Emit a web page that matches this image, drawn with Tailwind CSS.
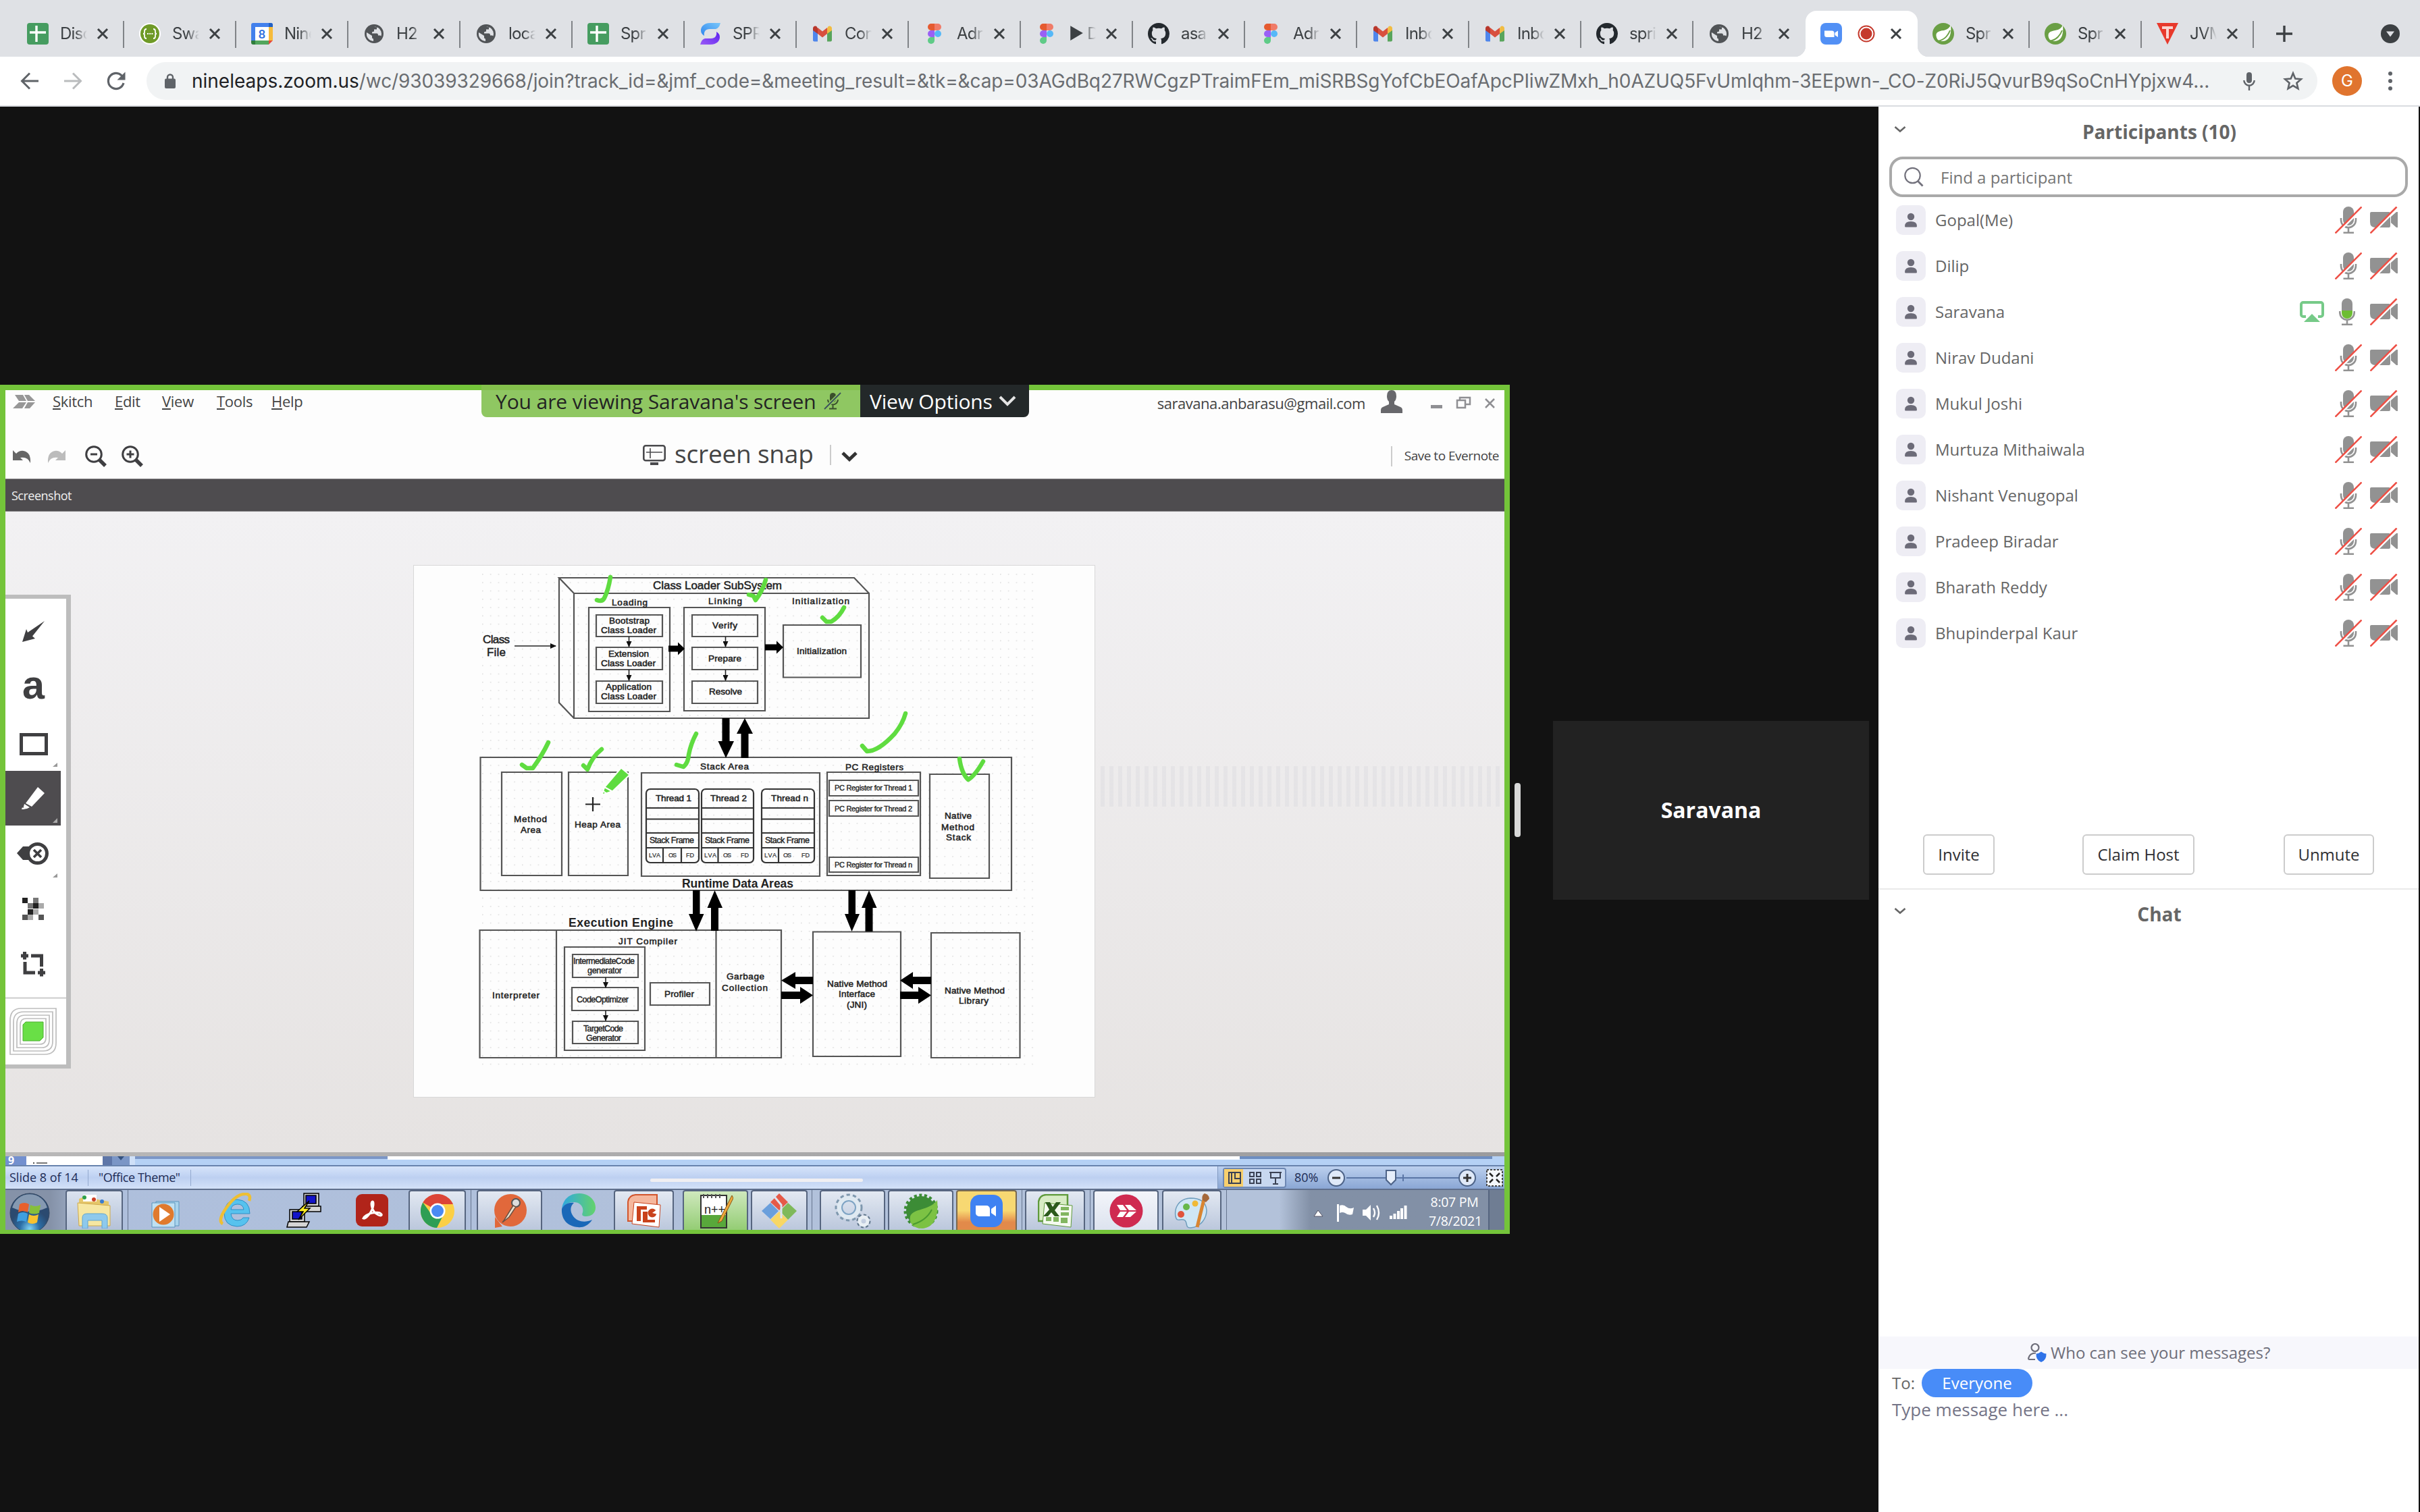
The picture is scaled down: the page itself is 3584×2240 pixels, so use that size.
<!DOCTYPE html>
<html lang="en">
<head>
<meta charset="utf-8">
<title>Zoom meeting</title>
<script src="https://cdn.jsdelivr.net/npm/@tailwindcss/browser@4"></script>
</head>
<body class="w-[3584px] h-[2240px] overflow-hidden bg-[#121212] flex flex-col font-['Open_Sans','Noto_Sans',sans-serif]">

<!-- Icon library -->
<svg class="absolute w-0 h-0">
  <symbol id="close" viewBox="0 0 18 18"><path d="M2 2 16 16M16 2 2 16" stroke="#3c4043" stroke-width="3" fill="none"/></symbol>
  <symbol id="sheets" viewBox="0 0 32 32"><rect width="32" height="32" rx="4" fill="#469c60"/><path d="M4 14H28M14 4V28" stroke="#fff" stroke-width="3.4"/></symbol>
  <symbol id="swagger" viewBox="0 0 32 32"><circle cx="16" cy="16" r="16" fill="#fff"/><circle cx="16" cy="16" r="14" fill="#6f9a27"/><path d="M11 9q-3 0-3 3v2q0 2-2 2 2 0 2 2v2q0 3 3 3M21 9q3 0 3 3v2q0 2 2 2-2 0-2 2v2q0 3-3 3M12 16h2M15.200 16h2M18.400 16h2" stroke="#fff" stroke-width="1.800" fill="none"/></symbol>
  <symbol id="calendar" viewBox="0 0 32 32"><path d="M0 3a3 3 0 0 1 3-3H29a3 3 0 0 1 3 3V6H0Z" fill="#4280ec"/><path d="M0 6H6V26H0Z" fill="#4280ec"/><path d="M26 0h3a3 3 0 0 1 3 3V6H26Z" fill="#2361c4"/><path d="M26 6h6V26H26Z" fill="#f6bb3b"/><path d="M0 26H6V32H3a3 3 0 0 1-3-3Z" fill="#2f7d3c"/><path d="M6 26H26V32H6Z" fill="#52a55c"/><path d="M26 26h6L26 32Z" fill="#e5463a"/><rect x="6" y="6" width="20" height="20" fill="#fff"/><text x="16" y="23" font-family="Roboto" font-size="19" font-weight="500" fill="#2f6fde" text-anchor="middle">8</text></symbol>
  <symbol id="globe" viewBox="0 0 28 28"><circle cx="14" cy="14" r="14" fill="#515457"/><path d="M3 12 11 17v2.500a2 2 0 0 0 2 2V25A11 11 0 0 1 3 12ZM14 3.500q3 0 4 1v3h-4v3l-3 1v2h7q2 0 2 3h3l1.500 1A11 11 0 0 0 20 5" fill="#dfe1e5"/></symbol>
  <symbol id="spiral" viewBox="0 0 32 32"><defs><linearGradient id="sa" x1="0" y1="1" x2="1" y2="0"><stop stop-color="#2f86ee"/><stop offset="1" stop-color="#79c7fa"/></linearGradient><linearGradient id="sb" x1="0" y1="1" x2="1" y2="0"><stop stop-color="#9b5cf6"/><stop offset="1" stop-color="#5b1fee"/></linearGradient></defs><path d="M31 0H16C6 0 2 6 2 11c0 4 2 6 5 8C6 13 9 9 15 9H24Q29 8 31 0Z" fill="url(#sa)"/><path d="M1 32H16c10 0 14-6 14-11 0-4-2-6-5-8 1 6-2 10-8 10H8Q3 24 1 32Z" fill="url(#sb)"/></symbol>
  <symbol id="gmail" viewBox="0 0 30 24"><path d="M1 5V21.500a2 2 0 0 0 2 2H8V10Z" fill="#4f86ec"/><path d="M29 5V21.500a2 2 0 0 1-2 2H22V10Z" fill="#58a55c"/><path d="M22 4V12l7-5V4c0-3-3.500-4.500-5.500-2.700Z" fill="#f1bc42"/><path d="M8 4V12L1 7V4C1 1 4.500-.5 6.500 1.300Z" fill="#b8372c"/><path d="M8 12V3l7 5.500L22 3v9l-7 5.500Z" fill="#d8503f"/></symbol>
  <symbol id="figma" viewBox="0 0 20 30"><path d="M10 0H5a5 5 0 0 0 0 10h5Z" fill="#e55a30"/><path d="M10 0h5a5 5 0 0 1 0 10h-5Z" fill="#f07b68"/><path d="M10 10H5a5 5 0 0 0 0 10h5Z" fill="#9a60f5"/><circle cx="15" cy="15" r="5" fill="#55b8f8"/><path d="M10 20H5a5 5 0 1 0 5 5Z" fill="#5fcb87"/></symbol>
  <symbol id="github" viewBox="0 0 16 16"><path fill="#24292e" d="M8 0C3.580 0 0 3.580 0 8c0 3.540 2.290 6.530 5.470 7.590.4.070.55-.17.55-.38 0-.19-.01-.82-.01-1.490-2.010.37-2.530-.49-2.690-.94-.09-.23-.48-.94-.82-1.130-.28-.15-.68-.52-.01-.53.63-.01 1.080.58 1.230.82.72 1.210 1.870.87 2.330.66.070-.52.28-.87.51-1.070-1.780-.2-3.640-.89-3.640-3.950 0-.87.31-1.590.82-2.150-.08-.2-.36-1.020.08-2.120 0 0 .67-.21 2.200.82a7.600 7.600 0 0 1 4 0c1.530-1.040 2.200-.82 2.200-.82.44 1.100.16 1.920.08 2.120.51.56.82 1.270.82 2.150 0 3.070-1.870 3.750-3.650 3.950.29.25.54.73.54 1.480 0 1.070-.01 1.930-.01 2.200 0 .21.15.46.55.38A8 8 0 0 0 16 8c0-4.420-3.580-8-8-8z"/></symbol>
  <symbol id="zoomfav" viewBox="0 0 32 32"><rect width="32" height="32" rx="8" fill="#5290f5"/><path d="M6 11.500H17a3.500 3.500 0 0 1 3.500 3.500v6H9.500A3.500 3.500 0 0 1 6 17.500ZM21.500 14.500 26 11.500V21L21.500 18Z" fill="#fff"/></symbol>
  <symbol id="record" viewBox="0 0 26 26"><circle cx="13" cy="13" r="11.500" fill="none" stroke="#c5392c" stroke-width="2"/><circle cx="13" cy="13" r="8.500" fill="#c5392c"/></symbol>
  <symbol id="spring" viewBox="0 0 32 32"><circle cx="16" cy="16" r="16" fill="#6a9f45"/><path d="M27 3C28 14 27 27 14 27 9 27 6 24 5.500 19 5 11 15 12 20 10Q25 8 27 3Z" fill="#fff"/><path d="M6 27Q20 26 26 11" stroke="#6a9f45" stroke-width="2" fill="none"/></symbol>
  <symbol id="tplus" viewBox="0 0 32 32"><path d="M0 0H32L16 32Z" fill="#e8392c"/><path d="M8 5H24V9H18V23H14V9H8Z" fill="#fbd5d0"/></symbol>
  <symbol id="person" viewBox="0 0 44 44"><rect width="44" height="44" rx="10" fill="#eeedf4"/><circle cx="22" cy="17" r="5.200" fill="#6c6b78"/><path d="M13 31q0-7 9-7t9 7q0 1.500-1.500 1.500h-15Q13 32.500 13 31Z" fill="#6c6b78"/></symbol>
  <symbol id="micoff" viewBox="0 0 40 40"><rect x="12" width="16" height="28" rx="8" fill="#929292"/><path d="M9 17v3a11 11 0 0 0 22 0V17M20 31v7M12.500 38.800h15.500" fill="none" stroke="#929292" stroke-width="2.600"/><path d="M2 41 40 3" stroke="#fff" stroke-width="3"/><path d="M.5 39.500 39.500.5" stroke="#ee5046" stroke-width="2.600"/></symbol>
  <symbol id="micon" viewBox="0 0 24 40"><path d="M4 18V8a8 8 0 0 1 16 0V18Z" fill="#929292"/><path d="M4 18H20v4a8 8 0 0 1-16 0Z" fill="#6dbd33"/><path d="M1.300 19v2a10.700 10.700 0 0 0 21.400 0V19M12 32v7M4 38.800H20" fill="none" stroke="#929292" stroke-width="2.600"/></symbol>
  <symbol id="camoff" viewBox="0 0 41 40"><path d="M0 10q0-2 2-2H28q2 0 2 2V29q0 2-2 2H8Q0 31 0 23ZM31 15 39 8h2V31H39L31 24Z" fill="#929292"/><path d="M2 41 40 3" stroke="#fff" stroke-width="3"/><path d="M.5 39.500 39.500.5" stroke="#ee5046" stroke-width="2.600"/></symbol>
  <symbol id="share" viewBox="0 0 36 32"><path d="M9 23H5a3 3 0 0 1-3-3V5A3 3 0 0 1 5 2H31a3 3 0 0 1 3 3V20a3 3 0 0 1-3 3H27" fill="none" stroke="#76ca88" stroke-width="4"/><path d="M18 19 30 31H6Z" fill="#76ca88"/></symbol>
</svg>

<!-- Browser tab strip -->
<div id="tabs" class="h-[84px] shrink-0 bg-[#dfe1e5] pt-4 pl-[18px] flex font-[Inter,sans-serif]"></div>

<!-- Address row -->
<div class="h-[74px] shrink-0 bg-white border-b-2 border-[#dadce0] pl-[30px] pr-[36px] flex items-center font-[Inter,sans-serif]">
  <svg class="w-7 h-7 shrink-0" viewBox="0 0 28 28" fill="none" stroke="#5f6368" stroke-width="3"><path d="M27 14H3M14 2.500 2.500 14 14 25.500"/></svg>
  <svg class="w-7 h-7 ml-9 shrink-0" viewBox="0 0 28 28" fill="none" stroke="#babcbe" stroke-width="3"><path d="M1 14H25M14 2.500 25.500 14 14 25.500"/></svg>
  <svg class="w-7 h-7 ml-9 shrink-0" viewBox="0 0 28 28"><path d="M24 8.500A11.500 11.500 0 1 0 25 17" fill="none" stroke="#5f6368" stroke-width="3.200"/><path d="M27.500.5V12.500H15.500Z" fill="#5f6368"/></svg>
  <div class="w-[3215px] h-14 ml-[31px] shrink-0 rounded-full bg-[#f1f3f4] flex items-center pl-[27px] text-[28px] text-[#6a6d71]">
    <svg class="w-4 h-[22px] shrink-0" viewBox="0 0 16 22"><path d="M4 9V5.500a4 4 0 0 1 8 0V9" fill="none" stroke="#5f6368" stroke-width="2.400"/><rect y="7.500" width="16" height="14.500" rx="2" fill="#5f6368"/></svg>
    <div class="ml-6 w-[3030px] whitespace-nowrap"><span class="text-[#202124]">nineleaps.zoom.us</span><span class="tracking-[-0.1px]">/wc/93039329668/join?track_id=&amp;jmf_code=&amp;meeting_result=&amp;tk=&amp;cap=03AGdBq27RWCgzPTraimFEm_miSRBSgYofCbEOafApcPIiwZMxh_h0AZUQ5FvUmIqhm-3EEpwn-_CO-Z0RiJ5QvurB9qSoCnHYpjxw4...</span></div>
    <svg class="w-[18px] h-[27px] ml-[8px] shrink-0" viewBox="0 0 18 27"><rect x="5" width="8" height="16" rx="4" fill="#5f6368"/><path d="M1.300 12a7.700 7.700 0 0 0 15.400 0M9 20v7" fill="none" stroke="#5f6368" stroke-width="2.400"/></svg>
    <svg class="w-[30px] h-[30px] ml-[41px] shrink-0" viewBox="0 0 30 30"><path d="M15 3.500 18.300 11.500 27 12.200 20.400 17.900 22.400 26.300 15 21.800 7.600 26.300 9.600 17.900 3 12.200 11.700 11.500Z" fill="none" stroke="#5f6368" stroke-width="2.600"/></svg>
  </div>
  <div class="w-11 h-11 ml-[22px] shrink-0 rounded-full bg-[#e0742e] text-white text-[24px] flex items-center justify-center">G</div>
  <svg class="w-[6px] h-7 ml-[39px] shrink-0" viewBox="0 0 6 28" fill="#5f6368"><circle cx="3" cy="3" r="3"/><circle cx="3" cy="14" r="3"/><circle cx="3" cy="25" r="3"/></svg>
</div>

<main class="h-[2082px] flex items-center">

  <!-- Shared screen -->
  <section class="relative w-[2236px] h-[1258px] shrink-0 border-x-8 border-t-8 border-b-[6px] border-[#74c43a] bg-[#fdfdfd] flex flex-col text-[#444]">
    <div class="h-[34px] shrink-0 flex items-center pl-[11px] text-[22px] tracking-[-0.3px]">
      <svg class="w-[34px] h-[20px] shrink-0" viewBox="0 0 34 20" fill="#979797"><path d="M3 0H15L20 9H9ZM17 0H24L33 9H22ZM9 11H20L14 20H0ZM22 11H33L25 20H17Z"/></svg>
      <div class="ml-[25px] w-[92px] -mt-0.5"><u>S</u>kitch</div>
      <div class="w-[70px] -mt-0.5"><u>E</u>dit</div>
      <div class="w-[81px] -mt-0.5"><u>V</u>iew</div>
      <div class="w-[81px] -mt-0.5"><u>T</u>ools</div>
      <div class="w-[80px] -mt-0.5"><u>H</u>elp</div>
      <div class="ml-auto pt-1 text-[22px] tracking-[-0.45px]">saravana.anbarasu@gmail.com</div>
      <svg class="w-8 h-[34px] ml-[23px]" viewBox="0 0 32 34" fill="#68686c"><path d="M16 0q7 0 7 9 0 5-3 8v4l9 4q3 1 3 5v4H0V30q0-4 3-5l9-4V17Q9 14 9 9q0-9 7-9Z"/></svg>
      <svg class="w-[96px] h-5 ml-[42px] mr-[13px] mt-1" viewBox="0 0 96 20" fill="none" stroke="#8f8f93" stroke-width="2.500"><path d="M0 15.500H17" stroke-width="5"/><path d="M39 6H51V17H39ZM43 6V2H58V12H52"/><path d="M81 4 94 17M94 4 81 17"/></svg>
    </div>
    <div class="mt-[30px] h-[67px] shrink-0 flex items-center pl-[11px]">
      <svg class="w-[27px] h-5 shrink-0" viewBox="0 0 27 20" fill="#666"><path d="M0 1 5 6Q10 1 16 2 27 4 26 20 22 10 11 12L15 16H0Z"/></svg>
      <svg class="w-[27px] h-5 ml-6 shrink-0" viewBox="0 0 27 20" fill="#bcbcbc"><path d="M27 1 22 6Q17 1 11 2 0 4 1 20 5 10 16 12L12 16H27Z"/></svg>
      <svg class="w-8 h-8 ml-[29px] shrink-0" viewBox="0 0 32 32" fill="none" stroke="#3f3f42"><circle cx="13" cy="13" r="11.300" stroke-width="3"/><path d="M8 13H18" stroke-width="3"/><path d="M21 21 30 30" stroke-width="5.500"/></svg>
      <svg class="w-8 h-8 ml-[22px] shrink-0" viewBox="0 0 32 32" fill="none" stroke="#3f3f42"><circle cx="13" cy="13" r="11.300" stroke-width="3"/><path d="M7.500 13h11M13 7.500v11" stroke-width="3"/><path d="M21 21 30 30" stroke-width="5.500"/></svg>
      <svg class="w-[34px] h-[30px] ml-[740px] -mt-1 shrink-0" viewBox="0 0 34 30" fill="none" stroke="#4a4a4d"><rect x="1.300" y="1.300" width="31.400" height="22" rx="3" stroke-width="2.600"/><path d="M11 5V20M5 11H29" stroke-width="1.600"/><path d="M11 28H23" stroke-width="4"/></svg>
      <div class="ml-[13px] w-[230px] text-[37px] leading-[58px] pb-2 tracking-[-0.2px]">screen snap</div>
      <div class="w-0.5 h-[30px] bg-[#ccc] -mt-1"></div>
      <svg class="w-6 h-4 ml-[15px]" viewBox="0 0 24 16" fill="none" stroke="#333" stroke-width="5"><path d="M2 3 12 12.500 22 3"/></svg>
      <div class="w-0.5 h-[30px] bg-[#ccc] ml-auto"></div>
      <div class="ml-[18px] mr-2 text-[19px] tracking-[-0.5px]">Save to Evernote</div>
    </div>
    <div class="h-[49px] shrink-0 bg-[#4e4c4f] border-y border-[#8a898b] pl-[9px] pt-0.5 flex items-center text-[18px] text-[#f0f0f0] tracking-[-0.5px]">Screenshot</div>

    <!-- Editor canvas -->
    <div class="relative h-[949px] shrink-0 bg-linear-to-b from-[#f2f1f3] to-[#e6e3e2] flex items-start">
      <div class="absolute left-[1622px] right-0 top-[377px] h-[60px] opacity-35 bg-[repeating-linear-gradient(90deg,#d6d6dc_0_6px,transparent_6px_13px)]"></div>
      <div class="mt-[123px] w-[97px] h-[702px] shrink-0 bg-white border-y-[6px] border-r-[7px] border-[#bdbdbd]">
        <svg class="block w-[90px] h-[690px]" viewBox="8 887 90 690">
          <path d="M66 920 41 937 39 932 33 951 52 946 48 942.500Z" fill="#3f3f41"/>
          <text x="33" y="1035" font-family="Liberation Sans" font-weight="700" font-size="60" textLength="33" lengthAdjust="spacingAndGlyphs" fill="#3f3f41">a</text>
          <rect x="31.500" y="1088.500" width="37" height="28" fill="none" stroke="#3f3f41" stroke-width="5"/>
          <path d="M85 1130V1136H78ZM85 1294V1300H78Z" fill="#999"/>
          <rect x="8" y="1142" width="82" height="81" fill="#4e4c4f"/><path d="M85 1212V1219H78Z" fill="#aaa"/>
          <path d="M56 1166 66 1175 47 1195 38 1190ZM36 1191 44 1196 40 1198 34 1199ZM33 1196 36 1199 32 1199Z" fill="#fff"/>
          <path d="M25 1264 34 1254H46V1274H34Z" fill="#3f3f41"/><circle cx="55.500" cy="1264.500" r="14" fill="#fff" stroke="#3f3f41" stroke-width="5"/><path d="M50 1259 61 1270M61 1259 50 1270" stroke="#3f3f41" stroke-width="3.600"/>
          <g><path d="M33 1330h8v8h-8ZM49 1338h8v8h-8ZM41 1347h8v8h-8Z" fill="#222"/><path d="M49 1330h8v8h-8ZM41 1338h8v8h-8Z" fill="#777"/><path d="M57 1338h8v8h-8ZM49 1347h8v8h-8ZM41 1355h8v8h-8Z" fill="#aaa"/><path d="M33 1355h8v8h-8ZM57 1355h8v8h-8Z" fill="#555"/></g>
          <path d="M46 1416H61.500V1432M37 1425V1441H52" fill="none" stroke="#3f3f41" stroke-width="5"/><path d="M31 1416H42M36.500 1410V1421.500M56 1441H67M61.500 1435V1446.500" stroke="#3f3f41" stroke-width="5"/>
          <path d="M8 1478.500H98" stroke="#ccc" stroke-width="2"/>
          <g fill="none" stroke="#bdbdbd" stroke-width="1.700"><path d="M31 1494H83V1545Q83 1562 66 1562H15V1512Q15 1494 31 1494Z"/><path d="M35 1499H78V1543Q78 1557 64 1557H20V1514Q20 1499 35 1499Z"/><path d="M37 1504H73V1540Q73 1552 62 1552H25V1516Q25 1504 37 1504Z"/><path d="M39 1509H68V1537Q68 1547 59 1547H30V1518Q30 1509 39 1509Z"/></g>
          <path d="M38 1514H64V1537L59 1542H34V1518Z" fill="#69df46" stroke="#4cae31"/>
        </svg>
      </div>

      <!-- JVM architecture drawing -->
      <svg class="block w-[1008px] h-[787px] ml-[508px] mt-[80px] shrink-0 bg-[#fdfdfd] outline outline-[#d8d8d8]" viewBox="613 838 1008 787" font-family="Liberation Sans, Arial, sans-serif" fill="#222">
        <defs>
          <pattern id="dots" x="714" y="850" width="11.800" height="12.300" patternUnits="userSpaceOnUse"><rect width="1.600" height="1.600" fill="#dedede"/></pattern>
          <marker id="tip" markerUnits="userSpaceOnUse" markerWidth="9" markerHeight="8" refX="8" refY="4" orient="auto"><path d="M0 0 9 4 0 8Z" fill="#111"/></marker>
        </defs>
        <rect x="712" y="850" width="820" height="730" fill="url(#dots)"/>
        <g fill="none" stroke="#555" stroke-width="2.200">
          <path d="M850 879H1287V1064H850ZM850 879 828 856H1265L1287 879M828 856V1041L850 1064"/>
          <path d="M872 900H992V1054H872ZM1013 900H1133V1053H1013ZM1160 926H1275V1003.500H1160Z"/>
          <path d="M883 911h98v32h-98ZM883 959h98v33h-98ZM883 1009h98v33h-98ZM1025 911h97v32h-97ZM1025 959h97v33h-97ZM1025 1009h97v33h-97Z"/>
          <path d="M711.500 1122H1498V1319H711.500ZM743 1144h89v153h-89ZM842 1144h88v153h-88ZM950 1145h264v153H950ZM1225 1144h138v153h-138ZM1377 1147h88v154h-88Z"/>
          <path d="M1228 1156h132v23h-132ZM1228 1186h132v23h-132ZM1228 1270h132v22h-132Z"/>
          <g stroke="#333"><rect x="957" y="1169" width="78" height="109" rx="6"/><rect x="1039" y="1169" width="77" height="109" rx="6"/><rect x="1128" y="1169" width="78" height="109" rx="6"/>
          <path d="M957 1197h78m4 0h77m12 0h78M957 1213.500h78m4 0h77m12 0h78M957 1234h78m4 0h77m12 0h78M957 1256h78m4 0h77m12 0h78M982 1256v22M1009 1256v22M1063.500 1256v22M1153 1256v22"/></g>
          <path d="M710.500 1378H1157V1567H710.500ZM824 1378V1567M1060.500 1378V1567M836 1403H955V1556H836ZM848 1414h97v34h-97ZM847 1463h98v34h-98ZM848 1513h97v33h-97ZM963 1456h88v33h-88Z"/>
          <path d="M1204 1380.500H1334V1565H1204ZM1379 1382H1510.500V1567H1379Z"/>
        </g>
        <g stroke="#222" stroke-width="1.600" fill="none">
          <path d="M762 957H823" marker-end="url(#tip)"/><path d="M931.500 943V958" marker-end="url(#tip)"/><path d="M931.500 992V1008" marker-end="url(#tip)"/><path d="M1074.500 943V958" marker-end="url(#tip)"/><path d="M1074.500 992V1008" marker-end="url(#tip)"/><path d="M897 1448V1463" marker-end="url(#tip)"/><path d="M897 1497V1512" marker-end="url(#tip)"/>
        </g>
        <g fill="#000">
          <path d="M990 956.500H1004V951.500L1014 961 1004 970.500V965.500H990ZM1133 954.500H1150V949.500L1160 959 1150 968.500V963.500H1133Z"/>
          <path d="M1069.500 1064H1080.500V1098H1087L1075 1123 1063.500 1098H1069.500ZM1103 1064 1115 1087H1108.500V1123H1097.500V1087H1091Z"/>
          <path d="M1026 1319H1036.500V1354H1042.500L1031 1380 1020 1354H1026ZM1058.500 1319 1070 1345H1064V1379H1053V1345H1047.500Z"/>
          <path d="M1256.500 1319H1267V1354H1273L1261.500 1380 1251 1354H1256.500ZM1287 1319 1298.500 1345H1292.500V1380H1281.500V1345H1276Z"/>
          <path d="M1157 1452.500 1178 1440V1447H1204V1458H1178V1465ZM1204 1474.500 1185 1462V1469H1157V1480H1185V1487ZM1333 1452.500 1352 1440V1447H1379V1458H1352V1465ZM1379 1474.500 1360 1462V1469H1333V1480H1360V1487Z"/>
        </g>
        <g font-size="17" stroke="#222" stroke-width=".5">
          <text x="967" y="873" textLength="191">Class Loader SubSystem</text>
          <text x="715" y="953" textLength="40">Class</text><text x="721" y="972" textLength="28">File</text>
        </g>
        <g font-size="13.500" stroke="#222" stroke-width=".55">
          <text x="906" y="897" textLength="53">Loading</text><text x="1049" y="895" textLength="50">Linking</text><text x="1173" y="895" textLength="85">Initialization</text>
          <text x="1055" y="931" textLength="37">Verify</text><text x="1049" y="980" textLength="49">Prepare</text><text x="1050" y="1029" textLength="49">Resolve</text><text x="1180" y="969" textLength="74">Initialization</text>
          <text x="902" y="923.500" textLength="60">Bootstrap</text><text x="890" y="938" textLength="82">Class Loader</text><text x="901" y="973" textLength="60">Extension</text><text x="890" y="987" textLength="81">Class Loader</text><text x="897" y="1021.500" textLength="68">Application</text><text x="890" y="1036" textLength="82">Class Loader</text>
          <text x="761" y="1218" textLength="49">Method</text><text x="771" y="1234" textLength="30">Area</text><text x="851" y="1226" textLength="68">Heap Area</text><text x="1037" y="1140" textLength="72">Stack Area</text><text x="1252" y="1141" textLength="86">PC Registers</text>
          <text x="1399" y="1213" textLength="40">Native</text><text x="1394" y="1230" textLength="49">Method</text><text x="1401" y="1245" textLength="37">Stack</text>
          <text x="971" y="1187" textLength="53">Thread 1</text><text x="1052" y="1187" textLength="54">Thread 2</text><text x="1142" y="1187" textLength="55">Thread n</text>
          <text x="916" y="1399" textLength="87">JIT Compiler</text><text x="984" y="1477" textLength="44">Profiler</text><text x="729" y="1479" textLength="70">Interpreter</text><text x="1076" y="1451" textLength="56">Garbage</text><text x="1069" y="1467.500" textLength="68">Collection</text>
          <text x="1225" y="1462" textLength="89">Native Method</text><text x="1242" y="1477" textLength="54">Interface</text><text x="1254" y="1493" textLength="30">(JNI)</text><text x="1399" y="1472" textLength="89">Native Method</text><text x="1420" y="1487" textLength="44">Library</text>
        </g>
        <g font-size="12.500" stroke="#222" stroke-width=".4">
          <text x="962" y="1249" textLength="66">Stack Frame</text><text x="1044" y="1249" textLength="66">Stack Frame</text><text x="1133" y="1249" textLength="66">Stack Frame</text>
          <text x="849" y="1428" textLength="91">IntermediateCode</text><text x="870" y="1442" textLength="51">generator</text><text x="854" y="1485" textLength="77">CodeOptimizer</text><text x="864" y="1528" textLength="59">TargetCode</text><text x="868" y="1542" textLength="52">Generator</text>
        </g>
        <g font-size="11" stroke="#222" stroke-width=".35">
          <text x="1236" y="1170.500" textLength="115">PC Register for Thread 1</text><text x="1236" y="1201.500" textLength="115">PC Register for Thread 2</text><text x="1236" y="1285" textLength="115">PC Register for Thread n</text>
        </g>
        <g font-size="9" fill="#333" stroke="#333" stroke-width=".25">
          <text x="961" y="1269.500" textLength="17">LVA</text><text x="990" y="1269.500" textLength="12">OS</text><text x="1016" y="1269.500" textLength="12">FD</text>
          <text x="1043" y="1269.500" textLength="18">LVA</text><text x="1071" y="1269.500" textLength="12">OS</text><text x="1097" y="1269.500" textLength="12">FD</text>
          <text x="1132" y="1269.500" textLength="18">LVA</text><text x="1160" y="1269.500" textLength="12">OS</text><text x="1187" y="1269.500" textLength="12">FD</text>
        </g>
        <g font-size="17.500" font-weight="700"><text x="1010" y="1314.500" textLength="165">Runtime Data Areas</text><text x="842" y="1373" textLength="155">Execution Engine</text></g>
        <g fill="none" stroke="#5fdc40" stroke-width="6.500" stroke-linecap="round" stroke-linejoin="round">
          <path d="M884 889Q892 892 895 886 901 874 904 855"/><path d="M1109 881 1116 883 1119 889Q1129 876 1134 859"/><path d="M1218 915 1224 921H1231Q1243 914 1250 900"/>
          <path d="M773 1133 780 1138H789Q803 1119 812 1100"/><path d="M864 1134 870 1140Q877 1121 891 1110"/><path d="M1002 1133 1012 1136Q1019 1131 1020 1118 1023 1102 1031 1087"/>
          <path d="M1277 1105 1284 1113Q1301 1113 1325 1087 1337 1072 1341 1057"/><path d="M1421 1124Q1424 1146 1434 1155 1444 1149 1456 1128"/>
        </g>
        <path d="M920 1139 931 1148 907 1171 893 1176 896 1167Z" fill="#5fdc40" stroke="#fff" stroke-width="4" paint-order="stroke"/><path d="M895 1166 906 1172M892 1171 899 1176" stroke="#fff" stroke-width="2"/>
        <path d="M867 1191.500H889M878 1181V1202" stroke="#222" stroke-width="2.200"/>
      </svg>
    </div>

    <!-- Slide editor edge -->
    <div class="h-[6px] shrink-0 bg-linear-to-r from-[#b9b8b8] to-[#9b9b9d]"></div>
    <div class="h-[15px] shrink-0 bg-[#b5d1f5] border-b-2 border-[#6883ad] flex items-start overflow-hidden">
      <div class="w-[31px] h-full bg-[#7390cf] text-white text-[16px] font-bold leading-[12px] pl-1 shrink-0">9</div>
      <div class="w-[113px] h-full bg-white shrink-0 pt-[9px] pl-[10px] flex gap-[3px]"><div class="w-0.5 h-0.5 bg-[#555]"></div><div class="w-4 h-0.5 bg-[#777]"></div></div>
      <div class="w-[14px] h-full bg-[#5e76a8] shrink-0"></div>
      <div class="w-[26px] h-full bg-[#7b96c6] shrink-0 flex justify-center"><svg class="w-3 h-2" viewBox="0 0 12 8"><path d="M1 0H11L6 6Z" fill="#34527f"/></svg></div>
      <div class="w-[8px] h-full bg-[#cfe0f8] shrink-0"></div>
      <div class="w-[374px] h-1 bg-[#7b96c6] shrink-0"></div>
      <div class="w-[1262px] h-[5px] bg-white shrink-0"></div>
      <div class="w-[374px] h-1 bg-[#6d8dc0] shrink-0"></div>
    </div>
    <div class="h-[35px] shrink-0 bg-linear-to-b from-[#d6e4fa] via-[#bdd0f1] to-[#d3e1f8] border-b-2 border-[#5f6f8c] flex items-center text-[18px] text-[#1d2c55]">
      <div class="ml-[6px] w-[116px]">Slide 8 of 14</div>
      <div class="w-px h-6 bg-[#93a9cf]"></div>
      <div class="ml-[15px] w-[136px] tracking-[-0.4px]">"Office Theme"</div>
      <div class="w-px h-6 bg-[#93a9cf]"></div>
      <div class="ml-[680px] mt-[8px] w-[315px] h-[5px] rounded-full bg-[#f0eff2]"></div>
      <div class="ml-auto w-[425px] h-full bg-linear-to-b from-[#bcd0ee] to-[#8aa6d4] border-l border-[#8099c0] flex items-center">
        <svg class="w-[94px] h-[30px] ml-[7px]" viewBox="0 0 94 30" fill="none" stroke="#3b4254" stroke-width="2"><rect x="1" y="1" width="92" height="28" rx="3" stroke="#6d87b3" fill="#c8d8f0"/><rect x="2" y="2" width="28" height="26" fill="#f7cf6d" stroke="none"/><path d="M9 7H26V23H9ZM13 7V23M18 7V16H26"/><path d="M40 7h6v6h-6ZM50 7h6v6h-6ZM40 17h6v6h-6ZM50 17h6v6h-6ZM69 7H87M71 7V15H85V7M78 15V24M74 24H82"/></svg>
        <div class="ml-3 w-[48px]">80%</div>
        <svg class="w-[262px] h-7 shrink-0" viewBox="1965 1731 262 28" fill="none" stroke="#4d6387" stroke-width="2"><path d="M1994 1745H2162" stroke="#5a75a5"/><path d="M2078 1740V1750" stroke="#5a75a5"/><circle cx="1979" cy="1745" r="12" fill="#dfe9f8"/><path d="M1973 1745H1985" stroke="#333" stroke-width="3"/><path d="M2053 1734H2067V1748L2060 1755 2053 1748Z" fill="#e6eefa"/><circle cx="2173" cy="1745" r="12" fill="#dfe9f8"/><path d="M2167 1745H2179M2173 1739V1751" stroke="#333" stroke-width="3"/><rect x="2202" y="1733" width="23" height="24" fill="#f4f7fc" stroke="#444" stroke-dasharray="3 2"/><path d="M2206 1738 2211 1743M2221 1738 2216 1743M2206 1752 2211 1747M2221 1752 2216 1747" stroke="#222" stroke-width="2.500"/></svg>
      </div>
    </div>

    <!-- Windows taskbar -->
    <div class="h-[59px] shrink-0 flex bg-linear-to-r from-[#8592a8] from-3% via-[#aebfdc] via-6% to-[#b3c2da] to-80% overflow-hidden">
      <div class="w-[72px] shrink-0 flex items-center justify-center pt-2"><svg class="w-[60px] h-[60px] shrink-0" viewBox="0 0 60 60"><defs><radialGradient id="orb" cy=".9"><stop stop-color="#7fd3f4"/><stop offset=".5" stop-color="#2b6ea6"/><stop offset="1" stop-color="#2b4a70"/></radialGradient></defs><circle cx="30" cy="30" r="29" fill="url(#orb)" stroke="#33465f"/><path d="M4 22A27 27 0 0 1 56 22Q30 34 4 22Z" fill="#dfe8f2" opacity=".5"/><path d="M15 17Q22 13 29 17L27 29Q20 25 13 29Z" fill="#e8602c"/><path d="M31 18Q38 22 46 18L44 30Q37 33 29 30Z" fill="#86bf3b"/><path d="M13 31Q20 27 27 31L25 43Q18 40 11 43Z" fill="#3f9fe0"/><path d="M29 32Q36 36 43 32L41 44Q34 48 27 44Z" fill="#f8c22f"/></svg></div>
      <div class="ml-[17px] w-[85px] shrink-0 rounded-t border-2 border-b-0 border-[#56657f] bg-linear-to-b from-[#dbe3ef] to-[#b4c1d8] flex items-center justify-center"><svg class="w-[54px] h-[52px]" viewBox="0 0 54 52"><path d="M4 8 14 4 26 8 48 12V46L4 48Z" fill="#e6c76a"/><path d="M10 2H30V12H10Z" fill="#fff"/><circle cx="12" cy="6" r="3" fill="#2fa04c"/><circle cx="26" cy="9" r="3" fill="#cc4026"/><circle cx="38" cy="12" r="3" fill="#3b7dd0"/><path d="M2 14 50 18V48H4Z" fill="#f6e7a2" stroke="#cfa94a"/><path d="M9 52V36Q9 30 16 30H38Q46 30 46 36V52H38V40H17V52Z" fill="#8ec9ec" stroke="#5fa4d0"/></svg></div>
      <div class="w-[8px] shrink-0 border-r border-[#66758f]"></div>
      <div class="ml-[15px] w-20 shrink-0 flex items-center justify-center pt-3"><svg class="w-11 h-[42px]" viewBox="0 0 44 42"><path d="M8 2H42V38H8Z" fill="#a9d3ec" stroke="#5b95bd"/><path d="M2 4H36V40H2Z" fill="#bfe0f2" stroke="#5b95bd"/><circle cx="19" cy="21" r="15.500" fill="#e07a2d"/><path d="M13 10V32L29 21Z" fill="#fff"/></svg></div>
      <div class="ml-[25px] w-20 shrink-0 flex items-center justify-center"><svg class="w-[52px] h-[52px]" viewBox="0 0 52 52"><path d="M46 31H18q1 10 10 10 6 0 8-4h9Q41 50 27 50 8 49 8 30 9 11 27 10 46 11 46 31ZM18 25H37Q36 17 28 17 19 17 18 25Z" fill="#56c2ee" stroke="#2e8fc6"/><path d="M6 46Q-2 42 10 24 26 0 42 2 48 4 45 12" fill="none" stroke="#eebf34" stroke-width="4.500"/></svg></div>
      <div class="ml-5 w-20 shrink-0 flex items-center justify-center"><svg class="w-[52px] h-[52px]" viewBox="0 0 52 52" stroke="#000" stroke-width="1.500"><path d="M26 1H48V20H26Z" fill="#d5d5d5"/><path d="M29 4H44V16H29Z" fill="#1414c8"/><path d="M24 20H51V28H22Z" fill="#d5d5d5"/><path d="M5 25H27V43H5Z" fill="#d5d5d5"/><path d="M9 28H23V39H9Z" fill="#1414c8"/><path d="M3 43H34L30 51H1Z" fill="#d5d5d5"/><path d="M34 12 16 28H25L18 40 35 23H27Z" fill="#ffee22"/></svg></div>
      <div class="ml-[21px] w-20 shrink-0 flex items-center justify-center"><svg class="w-[48px] h-12" viewBox="0 0 48 48"><rect width="48" height="48" rx="9" fill="#b1241a"/><path d="M11 36C14 29 34 24 38 30 40 34 28 32 24 20 21 10 27 8 26 16 25 25 15 38 11 36Z" fill="none" stroke="#fff" stroke-width="3"/></svg></div>
      <div class="ml-[14px] w-[85px] shrink-0 rounded-t border-2 border-b-0 border-[#56657f] bg-linear-to-b from-[#e3e9f2] to-[#bbc7dc] flex items-center justify-center"><svg class="w-[50px] h-[50px]" viewBox="0 0 50 50"><circle cx="25" cy="25" r="25" fill="#fbcf45"/><path d="M25 25 3.300 12.500A25 25 0 0 1 46.700 12.500L48 15H25Z" fill="#dc4437"/><path d="M3.300 12.500A25 25 0 0 0 24 50L34 30 16 30Z" fill="#2e9e54"/><circle cx="25" cy="25" r="11.500" fill="#fff"/><circle cx="25" cy="25" r="9" fill="#4a8af4"/></svg></div>
      <div class="w-[8px] shrink-0 border-r border-[#66758f]"></div>
      <div class="ml-[8px] w-[97px] shrink-0 rounded-t border-2 border-b-0 border-[#56657f] bg-linear-to-b from-[#e3e9f2] to-[#bbc7dc] flex items-center justify-center"><svg class="w-[50px] h-[50px]" viewBox="0 0 50 50"><circle cx="26" cy="24" r="24" fill="#e1683b"/><path d="M3 50V34L14 48Z" fill="#e1683b"/><circle cx="34" cy="13" r="6" fill="#ddd" stroke="#555" stroke-width="2"/><path d="M30 17 17 38 14 42 24 34 34 19Z" fill="#eadfce" stroke="#6d5142" stroke-width="1.500"/></svg></div>
      <div class="ml-[14px] w-20 shrink-0 flex items-center justify-center"><svg class="w-[52px] h-[52px]" viewBox="0 0 52 52"><defs><linearGradient id="eg"><stop stop-color="#2fa8e0"/><stop offset="1" stop-color="#63d26c"/></linearGradient></defs><path d="M1 24C3 8 14 1 27 1 42 1 51 12 51 22 51 31 44 35 37 35 30 35 31 32 32 29 34 20 27 14 19 14 10 14 3 19 1 24Z" fill="url(#eg)"/><path d="M1 24C4 17 12 14 19 15 13 20 13 28 18 35 24 43 35 45 46 40 40 50 30 52 25 51 10 50 0 40 1 24Z" fill="#1a68b8"/></svg></div>
      <div class="ml-3 w-[89px] shrink-0 rounded-t border-2 border-b-0 border-[#56657f] bg-linear-to-b from-[#e3e9f2] to-[#bbc7dc] flex items-center justify-center"><svg class="w-[50px] h-[50px]" viewBox="0 0 50 50"><path d="M12 1H44V40H1V12Q2 2 12 1Z" fill="#f5b79d" stroke="#d2552c" stroke-width="2"/><path d="M10 12 49 16 47 49 7 44Z" fill="#fff" stroke="#c9421c"/><path d="M14 18H29V23H20V40H14ZM23 26H30V38H41V42H23Z" fill="#c9421c"/><circle cx="37" cy="28" r="6.500" fill="#c9421c"/><path d="M37 28 45 22V30Z" fill="#fff"/></svg></div>
      <div class="ml-[13px] w-[97px] shrink-0 rounded-t border-2 border-b-0 border-[#56657f] bg-linear-to-b from-[#cfe8bd] to-[#94cd74] flex items-center justify-center"><svg class="w-[52px] h-[52px]" viewBox="0 0 52 52"><path d="M4 3H42V51H4Z" fill="#fff" stroke="#333" stroke-width="2"/><path d="M5 32H41V50H5Z" fill="#58a83b"/><path d="M8 1V7M14 1V7M20 1V7M26 1V7M32 1V7" stroke="#555" stroke-width="2"/><text x="9" y="30" font-family="Liberation Sans" font-size="18" fill="#222">n++</text><path d="M50 3 32 38 29 44 35 41 52 7Z" fill="#eea93b" stroke="#875415"/></svg></div>
      <div class="ml-1 w-[84px] shrink-0 rounded-t border-2 border-b-0 border-[#56657f] bg-linear-to-b from-[#e3e9f2] to-[#bbc7dc] flex items-center justify-center"><svg class="w-[54px] h-[54px]" viewBox="0 0 54 54"><path d="M27 1 40 14 27 26 14 14Z" fill="#e55a48"/><path d="M53 27 40 40 28 27 40 15Z" fill="#7fb95a"/><path d="M27 53 14 40 27 28 40 40Z" fill="#f8d765"/><path d="M1 27 14 15 26 27 14 39Z" fill="#6a9fdc"/><path d="M20 6 30 18V38" fill="none" stroke="#dde4ef" stroke-width="3"/></svg></div>
      <div class="w-[7px] shrink-0 border-r border-[#66758f]"></div>
      <div class="ml-[11px] w-[97px] shrink-0 rounded-t border-2 border-b-0 border-[#56657f] bg-linear-to-b from-[#e3e9f2] to-[#bbc7dc] flex items-center justify-center"><svg class="w-[54px] h-[52px]" viewBox="0 0 54 52" fill="none"><circle cx="21" cy="21" r="18" stroke="#7f98ae" stroke-width="5" stroke-dasharray="5 4"/><circle cx="21" cy="21" r="14" stroke="#dfe9f1" stroke-width="7"/><circle cx="21" cy="21" r="10" stroke="#7ea4c4" stroke-width="2"/><circle cx="43" cy="41" r="9" stroke="#62788d" stroke-width="3" stroke-dasharray="4 3"/><circle cx="43" cy="41" r="6" stroke="#e9eff4" stroke-width="5"/></svg></div>
      <div class="ml-1 w-[97px] shrink-0 rounded-t border-2 border-b-0 border-[#56657f] bg-linear-to-b from-[#e3e9f2] to-[#bbc7dc] flex items-center justify-center"><svg class="w-[52px] h-[52px]" viewBox="0 0 52 52"><circle cx="26" cy="26" r="22" fill="#3c8c36"/><circle cx="26" cy="26" r="23" fill="none" stroke="#3c8c36" stroke-width="5" stroke-dasharray="4 3.500"/><path d="M50 10C52 30 48 50 28 52 14 52 8 44 10 34 14 22 38 26 50 10Z" fill="#7cc244"/><path d="M14 46Q34 40 42 24" stroke="#4a9a30" stroke-width="2" fill="none"/></svg></div>
      <div class="ml-1 w-[90px] shrink-0 rounded-t border-2 border-b-0 border-[#7a6a4f] bg-linear-to-b from-[#f7d872] from-50% to-[#e28a4a] to-80% flex items-center justify-center"><svg class="w-12 h-12" viewBox="0 0 48 48"><rect width="48" height="48" rx="14" fill="#3f82f2"/><path d="M8 16H24a5 5 0 0 1 5 5V32H13a5 5 0 0 1-5-5ZM31 21 38 16V32L31 27Z" fill="#fff"/></svg></div>
      <div class="w-[8px] shrink-0 border-r border-[#66758f]"></div>
      <div class="ml-1 w-[89px] shrink-0 rounded-t border-2 border-b-0 border-[#56657f] bg-linear-to-b from-[#e3e9f2] to-[#bbc7dc] flex items-center justify-center"><svg class="w-[52px] h-[50px]" viewBox="0 0 52 50"><path d="M12 1H44V40H1V12Q2 2 12 1Z" fill="#d8ecc5" stroke="#5f9a3b" stroke-width="2.500"/><path d="M10 13 51 17 49 49 7 44Z" fill="#f5faf0" stroke="#5f9a3b"/><path d="M12 34H20V40H12ZM23 34H31V41H23ZM34 35H44V43H34ZM34 19H46V24H34ZM34 27H46V32H34Z" fill="#82b660"/><path d="M11 12H18L22 19 27 12H34L25 24 32 33H25L20 27 15 33H8L17 23Z" fill="#2c5a1c"/></svg></div>
      <div class="w-[8px] shrink-0 border-r border-[#66758f]"></div>
      <div class="ml-1 w-[97px] shrink-0 rounded-t border-2 border-b-0 border-[#56657f] bg-linear-to-b from-[#f3f5fa] to-[#dde3ef] flex items-center justify-center"><svg class="w-[50px] h-[50px]" viewBox="0 0 50 50"><circle cx="25" cy="25" r="24.500" fill="#cf2a50"/><path d="M11 16H20L26 24H16ZM23 16H31L40 24H29ZM16 26H26L20 34H11ZM29 26H40L31 34H23Z" fill="#fff"/></svg></div>
      <div class="ml-[5px] w-[88px] shrink-0 rounded-t border-2 border-b-0 border-[#56657f] bg-linear-to-b from-[#e3e9f2] to-[#bbc7dc] flex items-center justify-center"><svg class="w-[52px] h-[52px]" viewBox="0 0 52 52"><path d="M24 7C6 8 0 22 2 34 4 44 10 36 16 40 20 44 16 51 24 51 40 50 48 36 48 25 47 12 38 7 24 7Z" fill="#cfe6f5" stroke="#6f9dbd" stroke-width="1.500"/><circle cx="10" cy="31" r="5" fill="#e0533c"/><circle cx="18" cy="20" r="5" fill="#67b84a"/><circle cx="31" cy="15" r="4.500" fill="#f0b938"/><path d="M45 5 34 50" stroke="#d98531" stroke-width="5"/><path d="M42 10Q40 3 45 0 52 2 52 8L47 13Z" fill="#a5683a"/></svg></div>
      <div class="w-[8px] shrink-0 border-r border-[#66758f]"></div>
      <div class="w-[387px] shrink-0 pl-[127px] flex items-center text-white bg-linear-to-r from-[#b3c2da] from-20% to-[#8290a6] to-32%">
        <svg class="w-[140px] h-[34px] mt-2 shrink-0" viewBox="1944 1780 140 34" fill="#fff"><path d="M1952 1793 1959 1802H1946Z" stroke="#556"/><path d="M1980 1784H1983V1810H1980Z"/><path d="M1984 1786Q1990 1784 1994 1788 1999 1792 2005 1789L2003 1799Q1997 1801 1992 1797 1988 1795 1984 1797Z"/><path d="M2018 1792H2023L2030 1785V1808L2023 1801H2018Z"/><path d="M2034 1790Q2038 1797 2034 1803M2039 1786Q2045 1797 2039 1807" fill="none" stroke="#fff" stroke-width="2.400"/><path d="M2058 1801H2062V1806H2058ZM2063.500 1798H2067.500V1806H2063.500ZM2069 1794H2073V1806H2069ZM2074 1790H2078V1806H2074ZM2079.500 1786H2083.500V1806H2079.500Z"/></svg>
        <div class="ml-8 mt-[5px] w-[76px] text-[19.500px] tracking-[-0.3px] leading-7 text-center whitespace-nowrap">8:07 PM<br>7/8/2021</div>
      </div>
      <div class="grow border-l-2 border-[#56657f] bg-[#6f7d93]"></div>
    </div>

    <!-- Sharing banner over the window -->
    <div class="absolute left-[705px] -top-2 h-12 flex text-[30px]">
      <div class="w-[561px] rounded-bl-lg bg-[#8fc762] border-t-8 border-[#84c04c] text-[#232323] flex items-center pl-[21px] pb-2 whitespace-nowrap tracking-[-0.1px]">You are viewing Saravana's screen
        <svg class="w-7 h-7 ml-[11px] shrink-0" viewBox="0 0 28 28"><rect x="10" y="2" width="9" height="14" rx="4.500" fill="#3a4f2c"/><path d="M7 12a7.500 7.500 0 0 0 15 0M14.500 20V25M9 25.500H20" fill="none" stroke="#3a4f2c" stroke-width="2"/><path d="M2 26 26 2" stroke="#8fc762" stroke-width="5"/><path d="M2 26 26 2" stroke="#3a4f5c" stroke-width="1.800"/></svg></div>
      <div class="w-[250px] rounded-br-lg bg-[#232829] text-white flex items-center pl-[14px] whitespace-nowrap tracking-[-0.2px]">View Options<svg class="w-[26px] h-4 ml-[9px] shrink-0" viewBox="0 0 26 16"><path d="M2 2 13 13 24 2" fill="none" stroke="#e4e4e4" stroke-width="4"/></svg></div>
    </div>
  </section>

  <div class="ml-[7px] mt-0.5 w-[9px] h-[80px] shrink-0 rounded bg-[#d9d9d9]"></div>
  <div class="ml-[48px] mt-0.5 w-[468px] h-[265px] shrink-0 bg-[#222] text-white text-[32px] font-bold flex items-center justify-center">Saravana</div>

  <!-- Side panel -->
  <aside class="ml-auto w-[802px] h-full shrink-0 bg-white border-r-2 border-[#111] flex flex-col text-[24px] text-[#666]">
    <div class="relative h-[74px] shrink-0 flex items-center justify-center text-[28px] font-bold pl-8">
      <svg class="absolute left-[23px] top-[28px] w-[18px] h-3" viewBox="0 0 18 12"><path d="M1.500 2 9 8.500 16.500 2" fill="none" stroke="#666" stroke-width="2.600"/></svg>
      Participants (10)
    </div>
    <div class="mx-4 h-[60px] shrink-0 rounded-[20px] border-4 border-[#a9a9a9] flex items-center pl-[18px] text-[#757575]">
      <svg class="w-[29px] h-[30px] shrink-0" viewBox="0 0 29 30" fill="none" stroke="#72717c"><circle cx="12.500" cy="13" r="11.200" stroke-width="2.200"/><path d="M20.500 21.500 27.500 28.500" stroke-width="2.800"/></svg>
      <span class="ml-[25px] mt-0.5">Find a participant</span>
    </div>
    <div id="people" class="h-[932px] shrink-0"></div>
    <div class="h-[94px] shrink-0 border-b-2 border-[#eaeaea] pl-[66px] flex items-start pt-3 text-[#2f2f33]">
      <div class="w-[106px] h-[60px] border-2 border-[#ccc] rounded-md flex items-center justify-center">Invite</div>
      <div class="w-[166px] h-[60px] ml-[130px] border-2 border-[#ccc] rounded-md flex items-center justify-center">Claim Host</div>
      <div class="w-[134px] h-[60px] ml-[132px] border-2 border-[#ccc] rounded-md flex items-center justify-center">Unmute</div>
    </div>
    <div class="relative h-[71px] shrink-0 flex items-center justify-center text-[28px] font-bold pl-8">
      <svg class="absolute left-[23px] top-[26px] w-[18px] h-3" viewBox="0 0 18 12"><path d="M1.500 2 9 8.500 16.500 2" fill="none" stroke="#666" stroke-width="2.600"/></svg>
      Chat
    </div>
    <div class="mt-auto h-12 shrink-0 bg-[#f7f7fc] flex items-center pl-[221px] text-[#6e6e7a]">
      <svg class="w-[28px] h-[28px] shrink-0" viewBox="0 0 28 28"><ellipse cx="11" cy="6.500" rx="5.500" ry="5.500" fill="none" stroke="#6e6e7a" stroke-width="2.200"/><path d="M11 24H2.500Q1 24 1.200 22 3 14.500 12 14.500" fill="none" stroke="#6e6e7a" stroke-width="2.200"/><path d="M20 12.500Q24 15.500 27.500 15.500 28 25 20 28 12 25 12.500 15.500 16 15.500 20 12.500Z" fill="#2f73e8"/></svg>
      <span class="ml-[6px]">Who can see your messages?</span>
    </div>
    <div class="h-[42px] shrink-0 flex items-center pl-5"><span class="w-[44px]">To:</span><div class="w-[164px] h-[42px] rounded-full bg-[#488cf8] text-white flex items-center justify-center">Everyone</div></div>
    <div class="h-[170px] shrink-0 pl-5 text-[26px] text-[#747487] leading-[36px]">Type message here ...</div>
  </aside>
</main>

<script>
const tabs = [["sheets","Disc"],["swagger","Swa"],["calendar","Nine"],["globe","H2"],["globe","loca"],["sheets","Spr"],["spiral","SPR"],["gmail","Con"],["figma","Adr"],["figma","▶ D"],["github","asa"],["figma","Adr"],["gmail","Inbo"],["gmail","Inbo"],["github","sprin"],["globe","H2"],["zoomfav",""],["spring","Spr"],["spring","Spr"],["tplus","JVM"]];
const size = {figma:"w-5 h-[30px] mx-1.5", globe:"w-7 h-7 mx-0.5", gmail:"w-[30px] h-6 mx-px"};
document.getElementById("tabs").innerHTML = tabs.map(([icon, name], i) => {
  const active = i === 16, edge = active || i === 15;
  return `<div class="relative w-[166px] shrink-0 flex items-center pl-[22px] ${active ? "bg-white rounded-t-2xl" : ""}">
    ${active ? '<div class="absolute -left-4 bottom-0 w-4 h-4 bg-[radial-gradient(circle_at_0_0,transparent_16px,#fff_16.500px)]"></div><div class="absolute -right-4 bottom-0 w-4 h-4 bg-[radial-gradient(circle_at_100%_0,transparent_16px,#fff_16.500px)]"></div>' : ""}
    <svg class="${size[icon] || "w-8 h-8"} shrink-0"><use href="#${icon}"/></svg>
    ${active ? '<svg class="w-[26px] h-[26px] ml-[23px] mr-[22px] shrink-0"><use href="#record"/></svg>' : `<div class="ml-[17px] w-[40px] mr-[14px] shrink-0 overflow-hidden whitespace-nowrap text-[24px] tracking-[-0.8px] text-[#3c4043] mask-r-from-55% mask-r-to-100%">${name}</div>`}
    <svg class="w-[18px] h-[18px] shrink-0"><use href="#close"/></svg>
    ${edge ? "" : '<div class="absolute right-0 top-[15px] w-0.5 h-10 bg-[#808387]"></div>'}
  </div>`;
}).join("") + `<svg class="w-6 h-6 ml-[33px] mt-[22px]" viewBox="0 0 24 24"><path d="M0 12H24M12 0V24" stroke="#3c4043" stroke-width="3.400"/></svg><svg class="w-7 h-7 ml-[131px] mt-5" viewBox="0 0 28 28"><circle cx="14" cy="14" r="14" fill="#3c4043"/><path d="M8 10.500H20L14 18.500Z" fill="#dfe1e5"/></svg>`;

const people = ["Gopal(Me)","Dilip","Saravana","Nirav Dudani","Mukul Joshi","Murtuza Mithaiwala","Nishant Venugopal","Pradeep Biradar","Bharath Reddy","Bhupinderpal Kaur"];
document.getElementById("people").innerHTML = people.map((name, i) => `<div class="h-[68px] flex items-center pl-[26px] pr-[31px]">
  <svg class="w-11 h-11"><use href="#person"/></svg>
  <div class="ml-[14px] mr-auto -mt-px">${name}</div>
  ${i === 2 ? '<svg class="w-9 h-8 mr-[22px]"><use href="#share"/></svg><svg class="w-6 h-10 mr-[10px]"><use href="#micon"/></svg>' : '<svg class="w-10 h-10"><use href="#micoff"/></svg>'}
  <svg class="w-[41px] h-10 ml-3"><use href="#camoff"/></svg></div>`).join("");
</script>
</body>
</html>
